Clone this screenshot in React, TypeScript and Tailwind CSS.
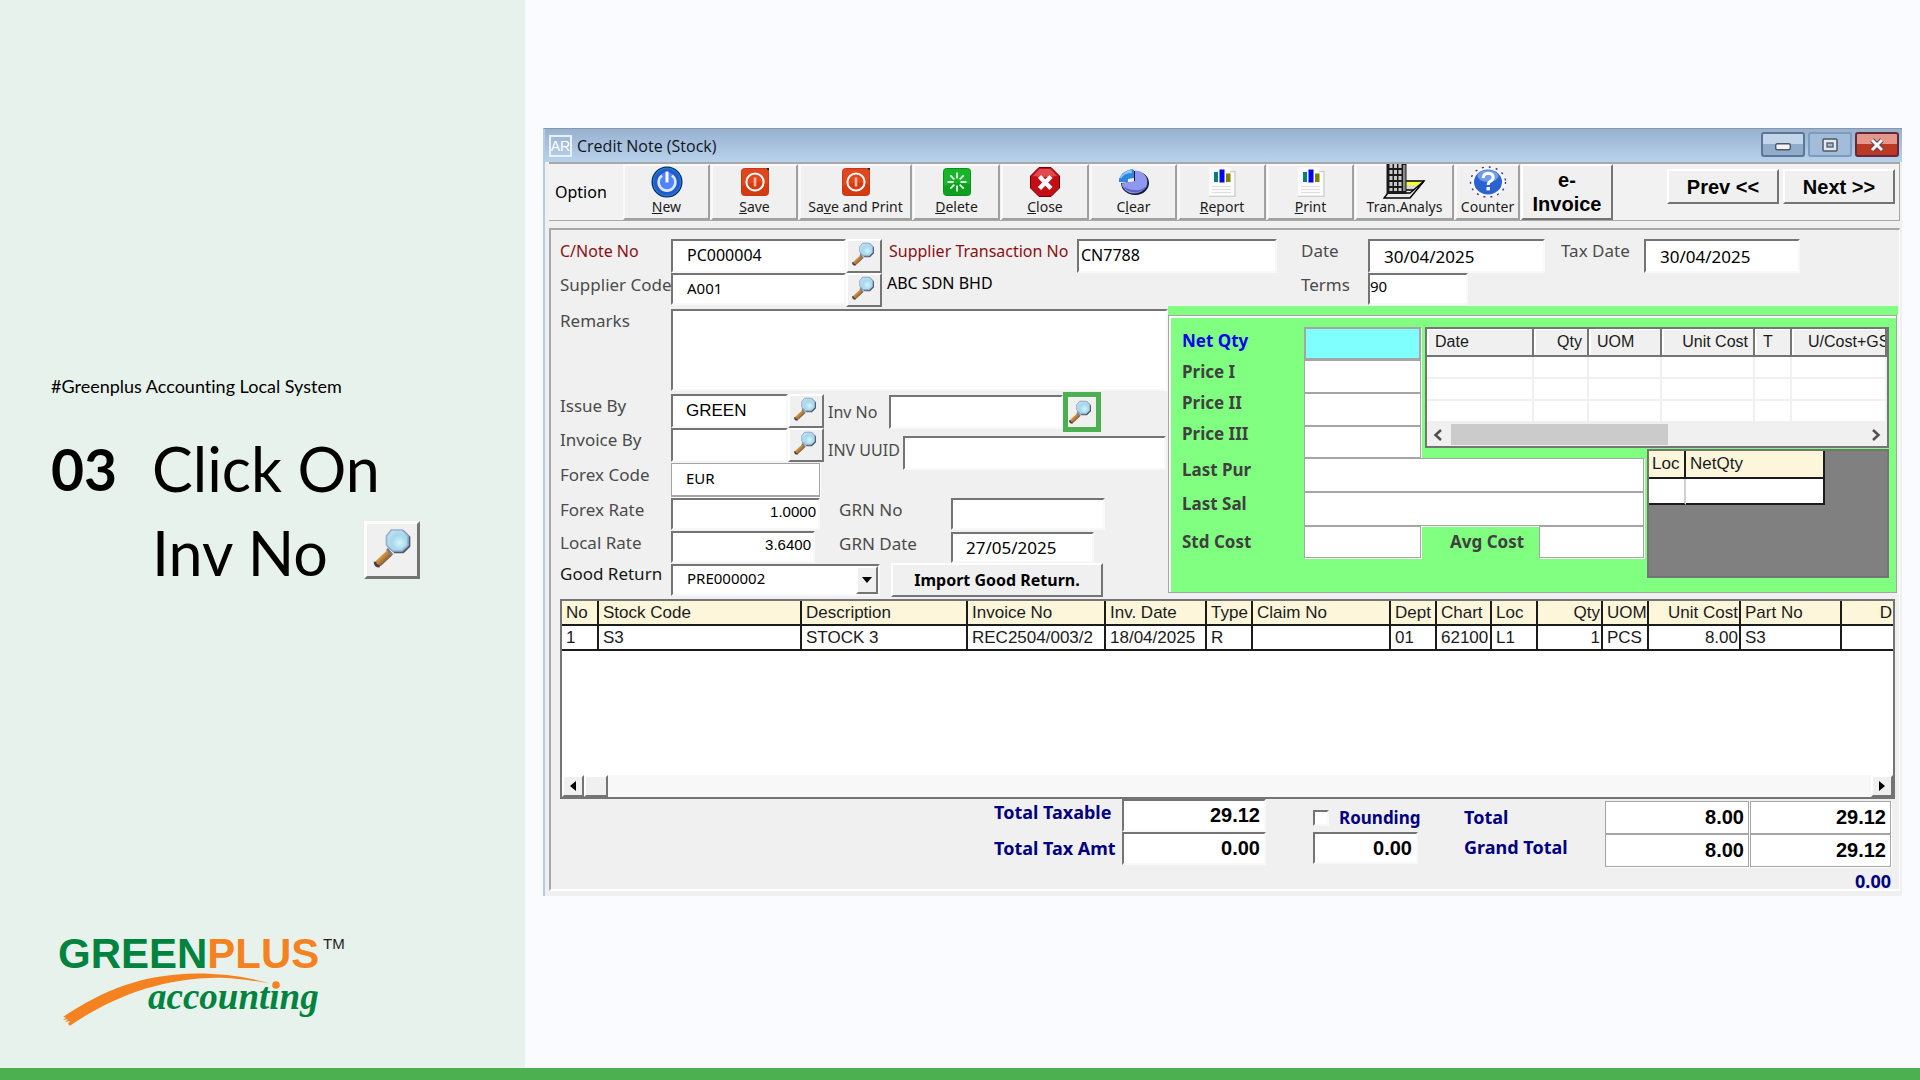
import type { ReactNode } from 'react';

const sunken =
  'bg-white rounded-none outline-none border-t-2 border-l-2 border-r-2 border-b-2 border-t-[#747474] border-l-[#747474] border-r-[#f8f8f8] border-b-[#f8f8f8] min-w-0';
const flat = 'bg-white rounded-none outline-none border border-[#a5a5a5] shadow-[1px_1px_0_#fff] min-w-0';
const raised = 'bg-[#f0f0f0] border-2 border-t-white border-l-white border-r-[#747474] border-b-[#747474]';
const labelBase = 'block shrink-0 whitespace-nowrap';
const label = `${labelBase} text-[17px] leading-6 text-[#4b4b4b]`;
const smallLabel = `${labelBase} text-base leading-6 text-[#4b4b4b]`;
const redLabel = `${labelBase} text-base leading-6 text-[#8b0f12]`;
const boldLabel = `${labelBase} text-[17px] leading-6 font-bold text-[#404040]`;
const blueLabel = `${labelBase} text-[17px] leading-6 font-bold text-[#0000f0]`;
const totalLabel = `${labelBase} text-lg leading-6 font-bold text-[#00007f]`;
const amount = "pr-1 text-right font-['Liberation_Sans',sans-serif] text-xl font-bold text-black";

function Magnifier({ className }: { className: string }) {
  return (
    <svg viewBox="0 0 24 24" className={className} aria-hidden="true">
      <defs>
        <radialGradient id="lens" cx="0.6" cy="0.6" r="0.6">
          <stop offset="0" stopColor="#d4f4fb" />
          <stop offset="0.6" stopColor="#a5d8ec" />
          <stop offset="1" stopColor="#c3dcf0" />
        </radialGradient>
        <linearGradient id="handle" x1="0" y1="0" x2="1" y2="1">
          <stop offset="0.2" stopColor="#ffb84a" />
          <stop offset="0.55" stopColor="#b07838" />
          <stop offset="0.8" stopColor="#3c3c50" />
        </linearGradient>
      </defs>
      <path d="M9.5 13 L2 20 Q1.5 22.5 4 23 L5.5 22.6 L12 16.5 Z" fill="url(#handle)" />
      <path d="M9 12.5 l3.2 3.8" stroke="#777b88" strokeWidth="1.5" />
      <path d="M1.8 20.3 Q1.8 23 4.6 22.9" stroke="#4a3c40" strokeWidth="1.6" fill="none" />
      <path d="M12 1.2 h7 l4 4 v6 l-4 4 h-5.5 l-4.5 -4 v-6 Z" fill="#4f5a6c" />
      <path d="M11.6 1.2 h6.6 l3.4 3.6 v5.6 l-3.6 3.4 h-5.4 l-3.9 -3.6 v-5.4 Z" fill="url(#lens)" stroke="#93b2cd" strokeWidth="1" />
    </svg>
  );
}

function LookupButton({ name }: { name: string }) {
  return (
    <button aria-label={name} className={`${raised} flex h-[34px] w-9 shrink-0 items-start justify-center pt-[1px] pr-[2px]`}>
      <Magnifier className="h-6 w-6" />
    </button>
  );
}

function PowerIcon() {
  return (
    <svg viewBox="0 0 32 32" className="h-8 w-8">
      <circle cx="16" cy="16" r="15.5" fill="#06207a" />
      <circle cx="16" cy="16" r="13.6" fill="#2257d8" stroke="#1f7fae" strokeWidth="1.6" />
      <circle cx="16" cy="15" r="9" fill="#4f83ff" />
      <path d="M11 9.5 a8.4 8.4 0 1 0 10 0" fill="none" stroke="#dbe8ff" strokeWidth="2.6" />
      <path d="M16 5.5 v11" stroke="#fff" strokeWidth="3" />
    </svg>
  );
}

function SaveIcon() {
  return (
    <svg viewBox="0 0 28 28" className="h-7 w-7">
      <rect x="0.5" y="0.5" width="27" height="27" rx="3" fill="#e2461c" stroke="#c23a18" />
      <path d="M1 18 Q14 12 27 16 V25 Q27 27 25 27 H3 Q1 27 1 25 Z" fill="#d63a10" />
      <circle cx="14" cy="14" r="8.6" fill="none" stroke="#fff" strokeWidth="2" />
      <path d="M14 9.5 v9" stroke="#ffb9a2" strokeWidth="2.6" />
      <path d="M25 0 h3 v3 Z" fill="#222" />
    </svg>
  );
}

function DeleteIcon() {
  return (
    <svg viewBox="0 0 28 28" className="h-7 w-7">
      <rect x="0.5" y="0.5" width="27" height="27" rx="3" fill="#17b52a" stroke="#0c8f1c" />
      <path d="M1 18 Q14 12 27 16 V25 Q27 27 25 27 H3 Q1 27 1 25 Z" fill="#0fa01f" />
      <g stroke="#e6ffe6" strokeWidth="1.8">
        <path d="M14 4.5 v6 M14 17.5 v6 M4.5 14 h6 M17.5 14 h6" />
        <path d="M7.3 7.3 l4 4 M16.7 16.7 l4 4 M20.7 7.3 l-4 4 M11.3 16.7 l-4 4" />
      </g>
    </svg>
  );
}

function CloseIcon() {
  return (
    <svg viewBox="0 0 30 30" className="h-[30px] w-[30px]">
      <path d="M9 0.5 h12 l8.5 8.5 v12 l-8.5 8.5 h-12 l-8.5 -8.5 v-12 Z" fill="#c40d14" stroke="#6e0508" />
      <path d="M9.5 2 h11 l6.5 7 q-12 2 -24 0 Z" fill="#e2484c" />
      <path d="M9.5 9.5 l11.5 12 M21 9.5 l-11.5 12" stroke="#fff" strokeWidth="4.4" />
    </svg>
  );
}

function ClearIcon() {
  return (
    <svg viewBox="0 0 32 28" className="h-7 w-8">
      <path d="M16 3 A14 12 0 1 1 3 15 L16 14 Z" fill="#101828" />
      <path d="M17 2.5 A13 11.5 0 1 1 3.5 15.5 L17 13 Z" fill="#8f97ee" />
      <path d="M5 18 A13 10 0 0 0 30 16 Q25 23 17 22 Q10 22 5 18 Z" fill="#5d66c6" />
      <path d="M1 11 Q4 3 14 1 L16 2 V10 L10 11 V14 H1 Z" fill="#2f86dc" />
      <path d="M1.5 10 Q5 3.5 13.5 1.5 L14 5 Q6 5 3.5 10 Z" fill="#8fc6f8" />
    </svg>
  );
}

function ReportIcon() {
  return (
    <svg viewBox="0 0 28 30" className="h-[30px] w-7">
      <path d="M1 0.5 h20 l6 5 v24 h-26 Z" fill="#fbfbfb" />
      <path d="M22 4.5 h5 v25 h-26" fill="none" stroke="#cfcfcf" strokeWidth="1.4" />
      <rect x="6" y="5" width="4" height="10" fill="#007f7f" />
      <rect x="11.5" y="2.5" width="5" height="13" fill="#0000f4" />
      <rect x="18" y="6.5" width="4.5" height="8.5" fill="#7f7f00" />
      <path d="M4 19.5 h19 M4 22.5 h19 M4 25.5 h19" stroke="#dedede" />
    </svg>
  );
}

function AnalysisIcon() {
  return (
    <svg viewBox="0 0 44 36" className="h-9 w-11">
      <path d="M22 17 H41 L33 26 H22 Z" fill="#d8d8d8" stroke="#000" strokeWidth="1.4" />
      <path d="M23 18 H39.5 L37 21 H23 Z" fill="#ffff1e" />
      <path d="M5 29 L27 29 L41 17 L27 34 H1 Z" fill="#e8e8e8" stroke="#000" strokeWidth="1.4" />
      <rect x="3.5" y="0" width="20" height="30" fill="#1a1a1a" />
      <g fill="#c9c9c9">
        <path d="M6.5 0h3v4h-3zM11 0h3v4h-3zM15.5 0h3v4h-3zM6.5 6h3v4h-3zM11 6h3v4h-3zM15.5 6h3v4h-3z" />
        <path d="M6.5 12h3v4h-3zM11 12h3v4h-3zM15.5 12h3v4h-3zM6.5 18h3v4h-3zM11 18h3v4h-3zM15.5 18h3v4h-3z" />
        <path d="M6.5 24h3v3h-3zM11 24h3v3h-3zM15.5 24h3v3h-3z" />
      </g>
      <rect x="20" y="1" width="2.5" height="26" fill="#8a8a8a" />
    </svg>
  );
}

function CounterIcon() {
  return (
    <svg viewBox="0 0 38 32" className="h-8 w-[38px]">
      <ellipse cx="19" cy="16" rx="17.5" ry="15" fill="#f8f6ff" stroke="#453a78" strokeWidth="1.4" strokeDasharray="2 5" />
      <ellipse cx="19" cy="16" rx="14" ry="12.5" fill="#2b62cf" />
      <ellipse cx="19" cy="10" rx="10.5" ry="6" fill="#6f9cec" />
      <path d="M14.2 12.2 q0.3 -5 5 -5 q5 0.2 5 4.3 q0 2.6 -3 4 q-2 1 -2 3.500" fill="none" stroke="#fff" strokeWidth="3" />
      <rect x="17.5" y="21" width="3.4" height="3.4" fill="#fff" />
    </svg>
  );
}

function ToolButton({ icon, width, children }: { icon: ReactNode; width: string; children: ReactNode }) {
  return (
    <button
      className={`${width} flex h-14 shrink-0 flex-col items-center border-t-2 border-l-2 border-r-2 border-b-2 border-t-[#fafafa] border-l-[#fafafa] border-r-[#a0a0a0] border-b-[#a0a0a0] bg-[#f0f0f0]`}
    >
      <span className="flex h-8 shrink-0 items-center justify-center">{icon}</span>
      <span className="text-sm leading-[18px] whitespace-nowrap text-[#1b1b1b]">{children}</span>
    </button>
  );
}

function Toolbar() {
  return (
    <div className="mr-[2px] ml-1 flex h-[59px] items-start border-t-2 border-r border-b border-[#a8a8a8] bg-[#f2f2f2]">
      <span className="w-[74px] shrink-0 self-center pl-[6px] text-base text-black">Option</span>
      <div className="flex gap-[1px]">
        <ToolButton width="w-[87px]" icon={<PowerIcon />}><u>N</u>ew</ToolButton>
        <ToolButton width="w-[87px]" icon={<SaveIcon />}><u>S</u>ave</ToolButton>
        <ToolButton width="w-[113px]" icon={<SaveIcon />}>Sa<u>v</u>e and Print</ToolButton>
        <ToolButton width="w-[87px]" icon={<DeleteIcon />}><u>D</u>elete</ToolButton>
        <ToolButton width="w-[88px]" icon={<CloseIcon />}><u>C</u>lose</ToolButton>
        <ToolButton width="w-[87px]" icon={<ClearIcon />}>C<u>l</u>ear</ToolButton>
        <ToolButton width="w-[88px]" icon={<ReportIcon />}><u>R</u>eport</ToolButton>
        <ToolButton width="w-[87px]" icon={<ReportIcon />}><u>P</u>rint</ToolButton>
        <ToolButton width="w-[99px]" icon={<AnalysisIcon />}>Tran.Analys</ToolButton>
        <ToolButton width="w-[65px]" icon={<CounterIcon />}>Counter</ToolButton>
        <button className={`${raised} h-14 w-[92px] font-['Liberation_Sans',sans-serif] text-xl leading-6 font-bold text-black`}>
          e-
          <br />
          Invoice
        </button>
      </div>
      <div className="ml-auto flex gap-1 pt-[5px] pr-[4px]">
        <button className={`${raised} h-[35px] w-28 font-['Liberation_Sans',sans-serif] text-xl leading-7 font-bold text-black`}>Prev &lt;&lt;</button>
        <button className={`${raised} h-[35px] w-28 font-['Liberation_Sans',sans-serif] text-xl leading-7 font-bold text-black`}>Next &gt;&gt;</button>
      </div>
    </div>
  );
}

function TitleBar() {
  return (
    <div className="flex h-[33px] items-center bg-linear-to-b from-[#97b1d0] to-[#b9d2ec] pr-[3px] pl-1">
      <span className="flex h-[22px] w-[23px] items-center justify-center border-2 border-[#e8f0f8] font-['Liberation_Sans',sans-serif] text-sm text-white">AR</span>
      <h2 className="ml-[5px] flex-1 font-['Open_Sans',sans-serif] text-base text-[#10151c]">Credit Note (Stock)</h2>
      <div className="flex gap-[3px] pb-[2px]">
        <button aria-label="Minimize" className="flex h-[25px] w-11 items-center justify-center rounded-[3px] border-2 border-[#5d7695] bg-linear-to-b from-[#c2d5ea] from-50% to-[#90acca] to-50%">
          <svg viewBox="0 0 16 8" className="mt-1 h-2 w-4"><rect x="0.7" y="0.7" width="14.6" height="6" rx="1.5" fill="#f4f4f4" stroke="#4d5866" strokeWidth="1.4" /></svg>
        </button>
        <button aria-label="Maximize" className="flex h-[25px] w-11 items-center justify-center rounded-[3px] border-2 border-[#7f9cbe] bg-[#a2bcda]">
          <svg viewBox="0 0 16 14" className="h-[14px] w-4"><rect x="1" y="1" width="14" height="12" rx="1" fill="#e4e8ee" stroke="#4d5866" strokeWidth="1.5" /><rect x="5" y="5" width="6" height="4" fill="#a2bcda" stroke="#4d5866" strokeWidth="1.3" /></svg>
        </button>
        <button aria-label="Close window" className="flex h-[25px] w-11 items-center justify-center rounded-[3px] border-2 border-[#66293a] bg-linear-to-b from-[#e4978a] from-50% to-[#bc3a25] to-50%">
          <svg viewBox="0 0 16 14" className="h-[14px] w-4"><path d="M3 2 L13 12 M13 2 L3 12" stroke="#5a4650" strokeWidth="5" /><path d="M3 2 L13 12 M13 2 L3 12" stroke="#f6f6f6" strokeWidth="3" /></svg>
        </button>
      </div>
    </div>
  );
}

function HeaderFields() {
  return (
    <div className="pt-[9px] pl-[9px]">
      <div className="flex h-[34px] items-start">
        <label htmlFor="cnote" className={`${redLabel} w-[111px]`}>C/Note No</label>
        <input id="cnote" defaultValue="PC000004" className={`${sunken} h-[34px] w-[175px] pb-[2px] pl-[14px] text-base text-black`} />
        <LookupButton name="Find note" />
        <label htmlFor="supplierTxn" className={`${redLabel} ml-[7px] w-[188px]`}>Supplier Transaction No</label>
        <input id="supplierTxn" defaultValue="CN7788" className={`${sunken} h-[34px] w-[200px] pb-[2px] pl-[2px] text-base text-black`} />
        <label htmlFor="date" className={`${label} ml-6 w-[67px]`}>Date</label>
        <input id="date" defaultValue="30/04/2025" className={`${sunken} h-[34px] w-[177px] pl-[14px] text-[17px] text-black`} />
        <label htmlFor="taxDate" className={`${label} ml-4 w-[83px]`}>Tax Date</label>
        <input id="taxDate" defaultValue="30/04/2025" className={`${sunken} h-[34px] w-[156px] pl-[14px] text-[17px] text-black`} />
      </div>
      <div className="flex h-[33px] items-start">
        <label htmlFor="supplier" className={`${label} w-[111px]`}>Supplier Code</label>
        <input id="supplier" defaultValue="A001" className={`${sunken} h-8 w-[175px] pb-[2px] pl-[14px] text-[15px] text-black`} />
        <LookupButton name="Find supplier" />
        <span className="ml-[5px] w-[414px] text-base leading-5 text-black">ABC SDN BHD</span>
        <label htmlFor="terms" className={`${label} w-[67px]`}>Terms</label>
        <input id="terms" defaultValue="90" className={`${sunken} h-8 w-[100px] pb-[6px] text-[15px] text-black`} />
      </div>
    </div>
  );
}

function LeftFields() {
  return (
    <div className="w-[617px] shrink-0 pt-[3px] pl-[9px]">
      <div className="flex h-[85px] items-start">
        <label htmlFor="remarks" className={`${label} w-[111px]`}>Remarks</label>
        <textarea id="remarks" className={`${sunken} h-[82px] flex-1 resize-none`} />
      </div>
      <div className="flex">
        <div className="w-[268px] shrink-0">
          <div className="flex h-[34px]">
            <label htmlFor="issueBy" className={`${label} w-[111px]`}>Issue By</label>
            <input id="issueBy" defaultValue="GREEN" className={`${sunken} h-[34px] w-[117px] pl-[13px] font-['Liberation_Sans',sans-serif] text-[17px] text-black`} />
            <LookupButton name="Find issuer" />
          </div>
          <div className="flex h-[35px]">
            <label htmlFor="invoiceBy" className={`${label} w-[111px]`}>Invoice By</label>
            <input id="invoiceBy" className={`${sunken} h-[34px] w-[117px]`} />
            <LookupButton name="Find invoicer" />
          </div>
          <div className="flex h-[35px]">
            <label htmlFor="forex" className={`${label} w-[111px]`}>Forex Code</label>
            <input id="forex" defaultValue="EUR" className={`${flat} h-[34px] w-[149px] border-b-2 pb-1 pl-[14px] text-[15px] text-black`} />
          </div>
          <div className="flex h-[33px]">
            <label htmlFor="forexRate" className={`${label} w-[111px]`}>Forex Rate</label>
            <input id="forexRate" defaultValue="1.0000" className={`${sunken} h-8 w-[149px] pr-[2px] pb-[6px] text-right font-['Liberation_Sans',sans-serif] text-[15px] text-black`} />
          </div>
          <div className="flex h-[33px]">
            <label htmlFor="localRate" className={`${label} w-[111px]`}>Local Rate</label>
            <input id="localRate" defaultValue="3.6400" className={`${sunken} h-8 w-36 pr-[2px] pb-[6px] text-right font-['Liberation_Sans',sans-serif] text-[15px] text-black`} />
          </div>
          <div className="flex h-[33px]">
            <label htmlFor="goodReturn" className={`${labelBase} w-[111px] text-[17px] leading-5 text-[#161616]`}>Good Return</label>
            <div className="relative -mr-14 w-[209px]">
              <select id="goodReturn" className={`${sunken} h-8 w-full appearance-none pb-1 pl-[14px] text-[15px] text-black`}>
                <option>PRE000002</option>
              </select>
              <span className={`${raised} pointer-events-none absolute top-[2px] right-[2px] flex h-7 w-[22px] items-center justify-center`}>
                <svg viewBox="0 0 10 6" className="h-[6px] w-[10px]"><path d="M0 0 H10 L5 6 Z" fill="#000" /></svg>
              </span>
            </div>
          </div>
        </div>
        <div className="-mt-[2px] flex-1">
          <div className="flex h-10 items-center">
            <label htmlFor="invNo" className={`${smallLabel} w-[61px]`}>Inv No</label>
            <input id="invNo" className={`${sunken} h-[34px] w-[174px]`} />
            <button aria-label="Find invoice" className="flex h-10 w-[38px] shrink-0 items-center justify-center border-[5px] border-[#4caf50] bg-[#f0f0f0] pr-[4px]">
              <Magnifier className="h-6 w-6" />
            </button>
          </div>
          <div className="mt-1 flex h-[34px] items-start">
            <label htmlFor="invUuid" className={`${smallLabel} w-[75px] pt-[2px]`}>INV UUID</label>
            <input id="invUuid" className={`${sunken} mr-[2px] h-[34px] flex-1`} />
          </div>
          <div className="mt-7 flex h-[34px] items-start pl-[11px]">
            <label htmlFor="grnNo" className={`${label} w-28`}>GRN No</label>
            <input id="grnNo" className={`${sunken} h-8 w-[154px]`} />
          </div>
          <div className="flex h-[31px] items-start pl-[11px]">
            <label htmlFor="grnDate" className={`${label} w-28`}>GRN Date</label>
            <input id="grnDate" defaultValue="27/05/2025" className={`${sunken} h-[31px] w-[143px] pl-[13px] text-[17px] text-black`} />
          </div>
          <button className={`${raised} ml-[63px] h-[34px] w-[212px] text-base leading-7 font-bold text-black`}>Import Good Return.</button>
        </div>
      </div>
    </div>
  );
}

function PriceHistory() {
  const head = 'border-r-2 border-b-2 border-[#747474] shadow-[inset_2px_1px_0_#fff] font-normal whitespace-nowrap overflow-hidden';
  return (
    <div className="overflow-hidden border-2 border-[#747474] bg-white">
      <table className="w-full table-fixed border-separate border-spacing-0 font-['Liberation_Sans',sans-serif] text-base leading-[26px] text-[#1b1b1b]">
        <colgroup>
          <col className="w-[107px]" />
          <col className="w-[55px]" />
          <col className="w-[73px]" />
          <col className="w-[93px]" />
          <col className="w-[37px]" />
          <col />
        </colgroup>
        <thead>
          <tr className="bg-[#f0f0f0]">
            <th className={`${head} pl-2 text-left`}>Date</th>
            <th className={`${head} pr-[5px] text-right`}>Qty</th>
            <th className={`${head} pl-2 text-left`}>UOM</th>
            <th className={`${head} pr-[5px] text-right`}>Unit Cost</th>
            <th className={`${head} pl-2 text-left`}>T</th>
            <th className={`${head} border-r-0 pl-4 text-left`}>U/Cost+GST</th>
          </tr>
        </thead>
        <tbody>
          {[0, 1, 2].map((row) => (
            <tr key={row} className="h-[22px]">
              {[0, 1, 2, 3, 4, 5].map((cell) => (
                <td key={cell} className="border-r-2 border-b-2 border-[#f0f0f0]" />
              ))}
            </tr>
          ))}
        </tbody>
      </table>
      <div className="flex h-[23px] items-center bg-[#f0f0f0] px-[6px]">
        <svg viewBox="0 0 10 12" className="h-3 w-[10px]"><path d="M8 1 L2.5 6 L8 11" fill="none" stroke="#505050" strokeWidth="2.5" /></svg>
        <div className="ml-2 h-[21px] w-[217px] bg-[#cbcbcb]" />
        <svg viewBox="0 0 10 12" className="ml-auto h-3 w-[10px]"><path d="M2 1 L7.5 6 L2 11" fill="none" stroke="#505050" strokeWidth="2.5" /></svg>
      </div>
    </div>
  );
}

function PricePanel() {
  return (
    <div className="min-w-0 flex-1 pr-[1px]">
      <div className="h-[9px] bg-[#80ff80]" />
      <div className="mr-[1px] grid h-[278px] grid-cols-[243px_222px_1fr] grid-rows-[122px_9px_1fr] border border-[#a5a5a5] bg-[#80ff80] pt-[11px] pr-[7px] pl-[13px] shadow-[inset_2px_2px_0_#fff]">
        <div className="row-span-2 flex">
          <div className="w-[122px] pt-[2px]">
            <label htmlFor="netQty" className={`${blueLabel} h-[31px]`}>Net Qty</label>
            <label htmlFor="price1" className={`${boldLabel} h-[31px]`}>Price I</label>
            <label htmlFor="price2" className={`${boldLabel} h-[31px]`}>Price II</label>
            <label htmlFor="price3" className={`${boldLabel} h-[31px]`}>Price III</label>
          </div>
          <div className="flex w-[117px] flex-col">
            <input id="netQty" className="h-[33px] border-2 border-[#a5a5a5] bg-[#80ffff] shadow-[1px_1px_0_#fff] outline-none" />
            <input id="price1" className={`${flat} h-[33px]`} />
            <input id="price2" className={`${flat} h-[33px]`} />
            <input id="price3" className={`${flat} h-8`} />
          </div>
        </div>
        <div className="col-span-2">
          <PriceHistory />
        </div>
        <div className="col-start-3 row-span-2 row-start-2 h-[129px] border-2 border-[#747474] bg-[#808080]">
          <table className="w-44 table-fixed border-separate border-spacing-0 font-['Liberation_Sans',sans-serif] text-[17px] leading-[26px] text-[#1b1b1b]">
            <thead>
              <tr className="bg-[#fdf6da]">
                <th className="w-[37px] border-r-2 border-b-2 border-[#1b1b1b] pl-[3px] text-left font-normal">Loc</th>
                <th className="border-r-2 border-b-2 border-[#1b1b1b] pl-1 text-left font-normal">NetQty</th>
              </tr>
            </thead>
            <tbody>
              <tr className="h-[26px] bg-white">
                <td className="border-r-2 border-b-2 border-r-[#d0d0d0] border-b-[#1b1b1b]" />
                <td className="border-r-2 border-b-2 border-[#1b1b1b]" />
              </tr>
            </tbody>
          </table>
        </div>
        <div className="col-span-2 col-start-1 row-start-3 pr-[3px]">
          <div className="flex h-[34px]">
            <label htmlFor="lastPur" className={`${boldLabel} w-[122px]`}>Last Pur</label>
            <input id="lastPur" className={`${flat} h-[34px] flex-1`} />
          </div>
          <div className="flex h-[34px]">
            <label htmlFor="lastSal" className={`${boldLabel} w-[122px]`}>Last Sal</label>
            <input id="lastSal" className={`${flat} h-[34px] flex-1`} />
          </div>
          <div className="flex h-8 items-center">
            <label htmlFor="stdCost" className={`${boldLabel} w-[122px]`}>Std Cost</label>
            <input id="stdCost" className={`${flat} h-8 w-[117px]`} />
            <label htmlFor="avgCost" className={`${boldLabel} ml-[29px] w-[89px]`}>Avg Cost</label>
            <input id="avgCost" className={`${flat} h-8 flex-1`} />
          </div>
        </div>
      </div>
    </div>
  );
}

const columns = [
  { title: 'No', value: '1', width: 'w-[36px]', align: 'text-left' },
  { title: 'Stock Code', value: 'S3', width: 'w-[203px]', align: 'text-left' },
  { title: 'Description', value: 'STOCK 3', width: 'w-[166px]', align: 'text-left' },
  { title: 'Invoice No', value: 'REC2504/003/2', width: 'w-[138px]', align: 'text-left' },
  { title: 'Inv. Date', value: '18/04/2025', width: 'w-[101px]', align: 'text-left' },
  { title: 'Type', value: 'R', width: 'w-[46px]', align: 'text-left' },
  { title: 'Claim No', value: '', width: 'w-[138px]', align: 'text-left' },
  { title: 'Dept', value: '01', width: 'w-[46px]', align: 'text-left' },
  { title: 'Chart', value: '62100', width: 'w-[55px]', align: 'text-left' },
  { title: 'Loc', value: 'L1', width: 'w-[46px]', align: 'text-left' },
  { title: 'Qty', value: '1', width: 'w-[65px]', align: 'text-right' },
  { title: 'UOM', value: 'PCS', width: 'w-[46px]', align: 'text-left' },
  { title: 'Unit Cost', value: '8.00', width: 'w-[92px]', align: 'text-right' },
  { title: 'Part No', value: 'S3', width: 'w-[101px]', align: 'text-left' },
  { title: 'D', value: '', width: '', align: 'text-right' },
];

function ItemsTable() {
  return (
    <div className="mt-[2px] mr-[4px] ml-[9px] flex h-[200px] flex-col border-2 border-[#747474] bg-white">
      <table className="w-full table-fixed border-collapse font-['Liberation_Sans',sans-serif] text-[17px] leading-[23px] text-[#1b1b1b]">
        <thead>
          <tr className="border-b-2 border-[#1b1b1b] bg-[#fdf6da]">
            {columns.map((c) => (
              <th key={c.title} className={`${c.width} ${c.align} border-r-2 border-[#1b1b1b] pr-[1px] pl-1 font-normal whitespace-nowrap last:border-r-0`}>{c.title}</th>
            ))}
          </tr>
        </thead>
        <tbody>
          <tr className="border-b-2 border-[#1b1b1b]">
            {columns.map((c) => (
              <td key={c.title} className={`${c.align} border-r-2 border-[#1b1b1b] pr-[1px] pl-1 whitespace-nowrap last:border-r-0`}>{c.value}</td>
            ))}
          </tr>
        </tbody>
      </table>
      <div className="mt-auto flex h-[22px] bg-[#f8f8f8]">
        <button aria-label="Scroll left" className={`${raised} flex w-[22px] items-center justify-center`}>
          <svg viewBox="0 0 6 10" className="h-[10px] w-[6px]"><path d="M6 0 V10 L0 5 Z" /></svg>
        </button>
        <div className={`${raised} w-6`} />
        <button aria-label="Scroll right" className={`${raised} ml-auto flex w-[22px] items-center justify-center`}>
          <svg viewBox="0 0 6 10" className="h-[10px] w-[6px]"><path d="M0 0 V10 L6 5 Z" /></svg>
        </button>
      </div>
    </div>
  );
}

function Totals() {
  return (
    <div className="flex h-[90px] justify-end pr-[8px]">
      <div className="w-32 pt-[1px]">
        <label htmlFor="taxable" className={`${totalLabel} h-9`}>Total Taxable</label>
        <label htmlFor="taxAmt" className={totalLabel}>Total Tax Amt</label>
      </div>
      <div className="flex w-[144px] flex-col">
        <input id="taxable" defaultValue="29.12" className={`${sunken} ${amount} h-[33px] border-r-[#747474]`} />
        <input id="taxAmt" defaultValue="0.00" className={`${sunken} ${amount} h-[33px] border-r-[#747474] border-b-[#747474]`} />
      </div>
      <div className="ml-[47px] w-[151px] pt-[5px]">
        <div className="flex h-7 items-center">
          <input id="rounding" type="checkbox" className={`${sunken} h-4 w-4 appearance-none`} />
          <label htmlFor="rounding" className={`${labelBase} ml-[10px] text-[17px] leading-6 font-bold text-[#00007f]`}>Rounding</label>
        </div>
        <input aria-label="Rounding amount" defaultValue="0.00" className={`${sunken} ${amount} h-8 w-[105px]`} />
      </div>
      <div className="w-[141px] pt-[6px]">
        <label htmlFor="total" className={`${totalLabel} h-[30px]`}>Total</label>
        <label htmlFor="grandTotal" className={totalLabel}>Grand Total</label>
      </div>
      <div>
        <div className="flex gap-[1px] pt-[2px]">
          <input id="total" defaultValue="8.00" className={`${flat} ${amount} h-[33px] w-36`} />
          <input aria-label="Local total" defaultValue="29.12" className={`${flat} ${amount} h-[33px] w-[141px]`} />
        </div>
        <div className="flex gap-[1px]">
          <input id="grandTotal" defaultValue="8.00" className={`${flat} ${amount} h-[33px] w-36`} />
          <input aria-label="Local grand total" defaultValue="29.12" className={`${flat} ${amount} h-[33px] w-[141px]`} />
        </div>
        <div className="pt-[2px] text-right text-lg leading-6 font-bold text-[#00007f]">0.00</div>
      </div>
    </div>
  );
}

function Logo() {
  return (
    <svg viewBox="0 0 300 100" className="h-[100px] w-[300px]" role="img" aria-label="Greenplus accounting">
      <path
        d="M5 83 C45 56 85 40 139 39.5 C165 39.5 190 43 212 49.5 C190 45.5 175 44 159 43.7 C105 44 55 62 12 91.7 L10 90 L12 87 L7 88 L10 85 L5 86 L8 83.500 Z"
        fill="#f58220"
      />
      <text x="0" y="34" fontFamily="Liberation Sans, sans-serif" fontWeight="700" fontSize="42" fill="#00833e">GREEN<tspan fill="#f58220">PLUS</tspan></text>
      <text x="265" y="15" fontFamily="Liberation Sans, sans-serif" fontSize="15" fill="#231f20">TM</text>
      <text x="90" y="75" fontFamily="Liberation Serif, serif" fontStyle="italic" fontWeight="700" fontSize="37" fill="#00833e">accounting</text>
      <circle cx="218" cy="51" r="4.6" fill="#e8f2ec" />
      <circle cx="218" cy="51" r="3.8" fill="#f58220" />
    </svg>
  );
}

export default function App() {
  return (
    <div className="flex min-h-screen flex-col bg-[#fafbff] font-['Noto_Sans',sans-serif]">
      <div className="flex flex-1">
        <aside className="flex w-[525px] shrink-0 flex-col bg-[#e8f2ec] pl-[51px] font-['Lato',sans-serif] text-black [font-variant-ligatures:none]">
          <p className="mt-[374px] text-lg leading-6">#Greenplus Accounting Local System</p>
          <div className="mt-[29px] flex">
            <span className="w-[101px] text-[57px] leading-[84px] font-bold">03</span>
            <h1 className="text-[61px] leading-[84px]">
              Click On
              <br />
              <span className="flex items-center">
                Inv No
                <span className={`${raised} mb-[6px] ml-9 flex h-[58px] w-[56px] items-center justify-center border-[3px] pb-1`}>
                  <Magnifier className="h-10 w-10" />
                </span>
              </span>
            </h1>
          </div>
          <div className="mt-auto mb-[34px] ml-[7px]">
            <Logo />
          </div>
        </aside>
        <main className="min-w-0 flex-1 px-[18px] pt-32">
          <div className="border-t border-l-2 border-t-[#8a96a4] border-l-[#b4cbe2] bg-[#f0f0f0] pb-[5px]">
            <TitleBar />
            <Toolbar />
            <div className="mt-[7px] mr-[2px] ml-1 border-t-2 border-r border-b-2 border-l-2 border-t-[#a8a8a8] border-r-white border-b-white border-l-[#a8a8a8]">
              <HeaderFields />
              <div className="flex">
                <LeftFields />
                <PricePanel />
              </div>
              <ItemsTable />
              <Totals />
            </div>
          </div>
        </main>
      </div>
      <div className="h-3 bg-[#4caf50]" />
    </div>
  );
}
